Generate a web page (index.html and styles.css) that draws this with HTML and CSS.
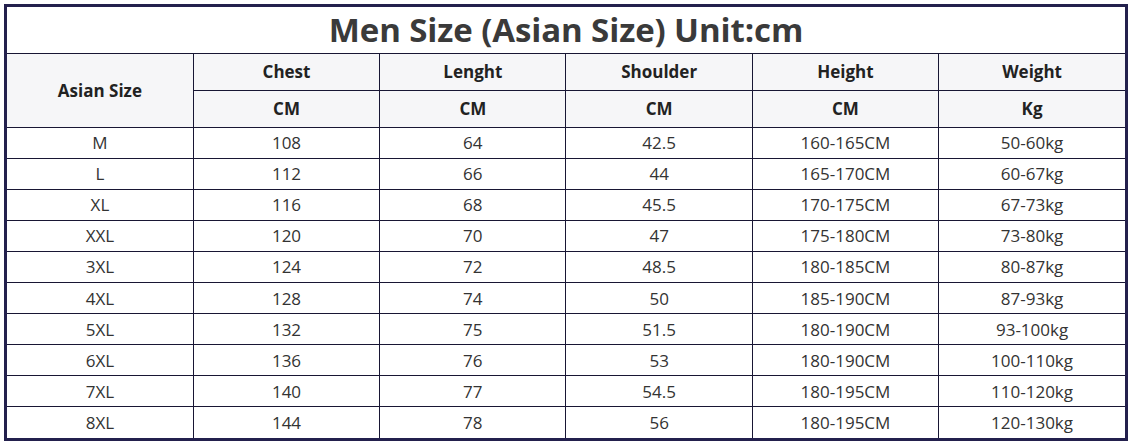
FILE: index.html
```html
<!DOCTYPE html>
<html lang="en">
<head>
<meta charset="utf-8">
<title>Men Size (Asian Size) Unit:cm</title>
<link rel="stylesheet" href="styles.css">
</head>
<body>
<div class="sheet">
  <table class="size-table">
    <colgroup>
      <col><col><col><col><col><col>
    </colgroup>
    <thead>
      <tr class="title-row"><th colspan="6" class="title">Men Size (Asian Size) Unit:cm</th></tr>
      <tr class="head-row">
        <th rowspan="2">Asian Size</th>
        <th>Chest</th>
        <th>Lenght</th>
        <th>Shoulder</th>
        <th>Height</th>
        <th>Weight</th>
      </tr>
      <tr class="head-row unit-row">
        <th>CM</th>
        <th>CM</th>
        <th>CM</th>
        <th>CM</th>
        <th>Kg</th>
      </tr>
    </thead>
    <tbody>
      <tr><td>M</td><td>108</td><td>64</td><td>42.5</td><td>160-165CM</td><td>50-60kg</td></tr>
      <tr><td>L</td><td>112</td><td>66</td><td>44</td><td>165-170CM</td><td>60-67kg</td></tr>
      <tr><td>XL</td><td>116</td><td>68</td><td>45.5</td><td>170-175CM</td><td>67-73kg</td></tr>
      <tr><td>XXL</td><td>120</td><td>70</td><td>47</td><td>175-180CM</td><td>73-80kg</td></tr>
      <tr><td>3XL</td><td>124</td><td>72</td><td>48.5</td><td>180-185CM</td><td>80-87kg</td></tr>
      <tr><td>4XL</td><td>128</td><td>74</td><td>50</td><td>185-190CM</td><td>87-93kg</td></tr>
      <tr><td>5XL</td><td>132</td><td>75</td><td>51.5</td><td>180-190CM</td><td>93-100kg</td></tr>
      <tr><td>6XL</td><td>136</td><td>76</td><td>53</td><td>180-190CM</td><td>100-110kg</td></tr>
      <tr><td>7XL</td><td>140</td><td>77</td><td>54.5</td><td>180-195CM</td><td>110-120kg</td></tr>
      <tr><td>8XL</td><td>144</td><td>78</td><td>56</td><td>180-195CM</td><td>120-130kg</td></tr>
    </tbody>
  </table>
</div>
</body>
</html>
```
FILE: styles.css
```css
html, body {
  background: #ffffff;
}

body {
  margin: 4px;
  font-family: "Open Sans", "Liberation Sans", sans-serif;
  color: #333333;
}

.sheet {
  width: 1118px;
  border: 3px solid #23204d;
  background: #ffffff;
}

.size-table {
  width: 100%;
  border-collapse: collapse;
  border-style: hidden;
  table-layout: fixed;
}

.size-table th,
.size-table td {
  border: 1px solid #181634;
  padding: 0;
  text-align: center;
  vertical-align: middle;
  white-space: nowrap;
}

.title-row {
  height: 46px;
}

.title {
  font-size: 33px;
  font-weight: 700;
  color: #3a3a3a;
  background: #ffffff;
  letter-spacing: -0.1px;
}

.head-row {
  height: 37px;
}

.head-row th {
  background: #f6f6f8;
  font-size: 17px;
  font-weight: 700;
  color: #222222;
}

.size-table tbody tr {
  height: 31.1px;
}

.size-table td {
  font-size: 17px;
  font-weight: 400;
  color: #333333;
  background: #ffffff;
}
```
